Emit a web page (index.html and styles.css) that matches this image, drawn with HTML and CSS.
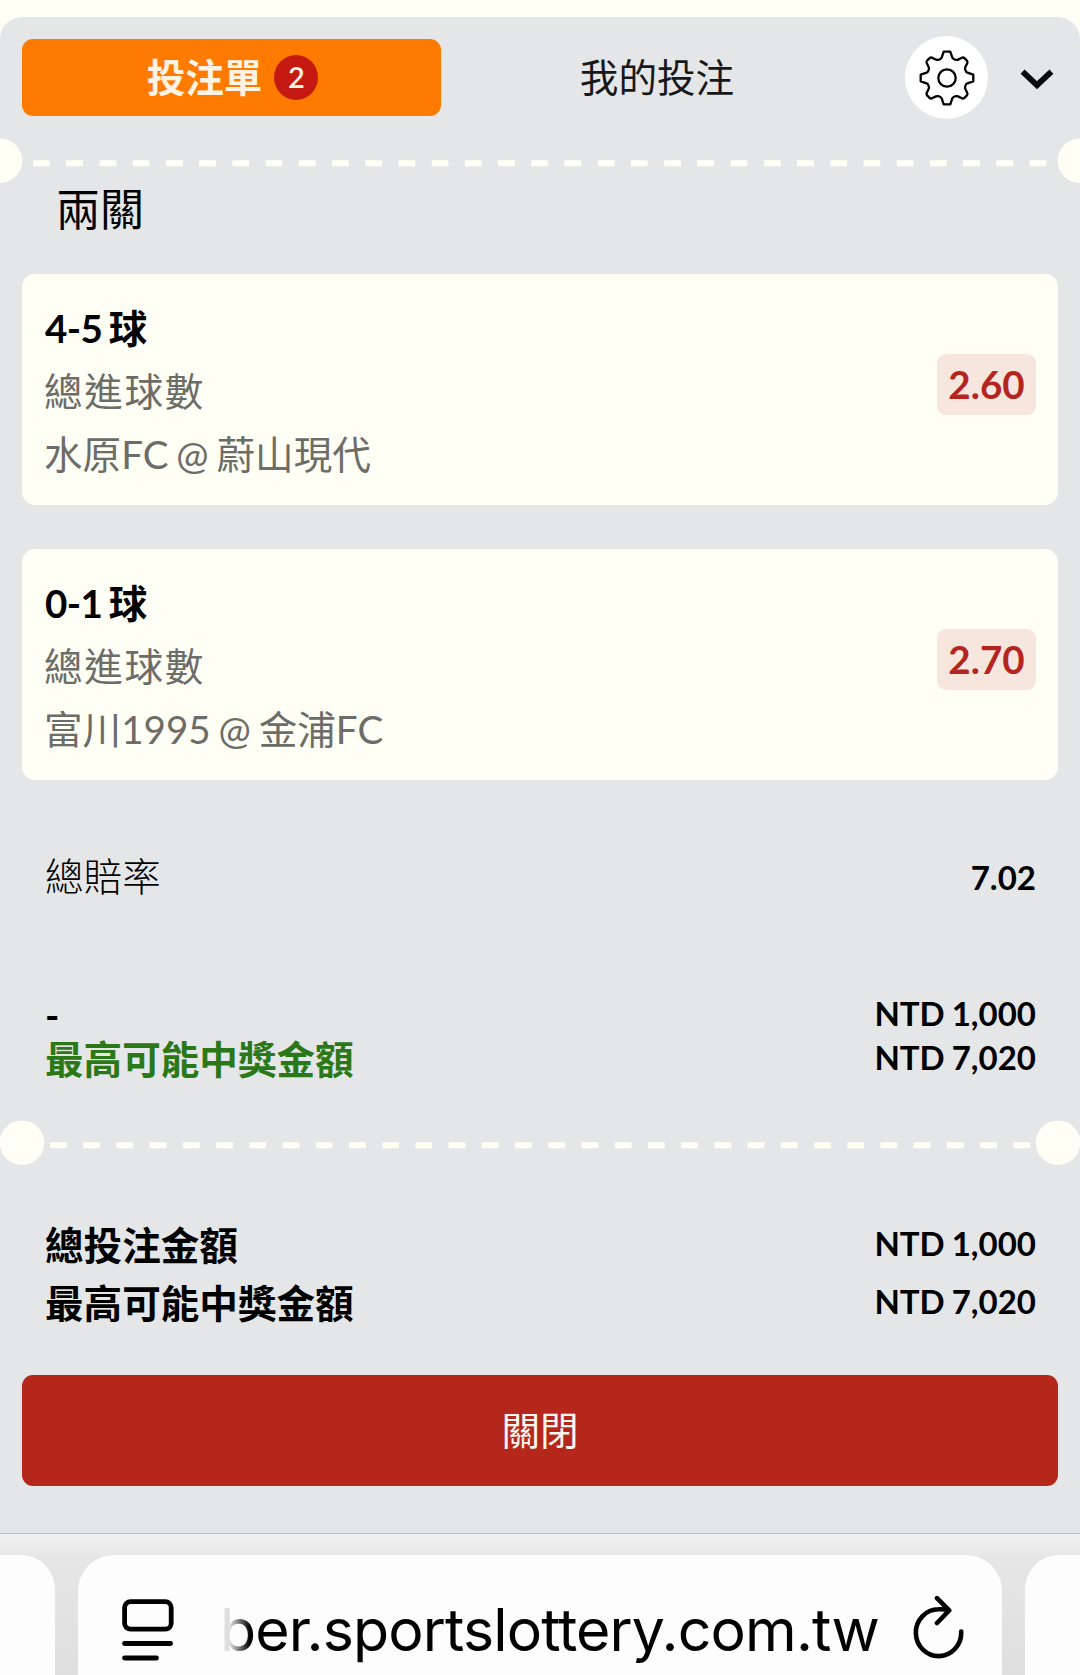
FILE: index.html
```html
<!DOCTYPE html>
<html lang="zh-Hant">
<head>
<meta charset="utf-8">
<title>投注單</title>
<link rel="stylesheet" href="styles.css">
</head>
<body>
<main class="slip">
  <header class="tabs">
    <div class="tab tab-active"><span>投注單</span><span class="count">2</span></div>
    <div class="tab tab-idle">我的投注</div>
    <button class="settings" aria-label="設定">
      <svg width="60" height="60" viewBox="-30 -30 60 60" fill="none" stroke="#000" stroke-width="2.3" stroke-linejoin="round">
        <path d="M-3.3-26.3H3.3L5.3-20.4Q6-18.9 7.5-18.5L9-18.1Q10-17.9 11-18.4L15-20.3Q16.4-20.8 17.4-19.9L19.9-17.4Q20.8-16.4 20.3-15L18.4-11Q17.9-10 18.1-9L18.5-7.5Q18.9-6 20.4-5.3L26.3-3.3V3.3L20.4 5.3Q18.9 6 18.5 7.5L18.1 9Q17.9 10 18.4 11L20.3 15Q20.8 16.4 19.9 17.4L17.4 19.9Q16.4 20.8 15 20.3L11 18.4Q10 17.9 9 18.1L7.5 18.5Q6 18.9 5.3 20.4L3.3 26.3H-3.3L-5.3 20.4Q-6 18.9-7.5 18.5L-9 18.1Q-10 17.9-11 18.4L-15 20.3Q-16.4 20.8-17.4 19.9L-19.9 17.4Q-20.8 16.4-20.3 15L-18.4 11Q-17.9 10-18.1 9L-18.5 7.5Q-18.9 6-20.4 5.3L-26.3 3.3V-3.3L-20.4-5.3Q-18.9-6-18.5-7.5L-18.1-9Q-17.9-10-18.4-11L-20.3-15Q-20.8-16.4-19.9-17.4L-17.4-19.9Q-16.4-20.8-15-20.3L-11-18.4Q-10-17.9-9-18.1L-7.5-18.5Q-6-18.9-5.3-20.4Z"/>
        <circle r="8.7"/>
      </svg>
    </button>
    <svg class="chevron" width="36" height="24" viewBox="0 0 36 24" fill="none" stroke="#0b0c0e" stroke-width="5.8"><path d="M3.6 4.6 18 18.2 32.4 4.6"/></svg>
  </header>

  <svg class="perforation" width="1080" height="46" viewBox="0 0 1080 46" fill="#fffff5">
    <circle cx="0" cy="22.7" r="22.3"/><circle cx="1080" cy="22.7" r="22.3"/>
    <path d="M33 25.2H1048" stroke="#fffff5" stroke-width="6" stroke-dasharray="16.8 16.42"/>
  </svg>

  <h1 class="combo">兩關</h1>

  <section class="card">
    <div class="pick">
      <div class="choice">4-5 球</div>
      <div class="market">總進球數</div>
      <div class="match">水原FC @ 蔚山現代</div>
    </div>
    <div class="odds">2.60</div>
  </section>
  <section class="card">
    <div class="pick">
      <div class="choice">0-1 球</div>
      <div class="market">總進球數</div>
      <div class="match">富川1995 @ 金浦FC</div>
    </div>
    <div class="odds">2.70</div>
  </section>

  <div class="row row-odds"><span class="light">總賠率</span><span class="amount">7.02</span></div>
  <div class="row row-stake"><span class="strong">-</span><span class="amount">NTD 1,000</span></div>
  <div class="row row-win"><span class="strong green">最高可能中獎金額</span><span class="amount">NTD 7,020</span></div>

  <svg class="perforation perforation-inner" width="1080" height="46" viewBox="0 0 1080 46" fill="#fffff5">
    <circle cx="22" cy="22.7" r="22.3"/><circle cx="1058" cy="22.7" r="22.3"/>
    <path d="M50 25.2H1031" stroke="#fffff5" stroke-width="6" stroke-dasharray="16.8 16.42"/>
  </svg>

  <div class="row row-total"><span class="strong">總投注金額</span><span class="amount">NTD 1,000</span></div>
  <div class="row row-total"><span class="strong">最高可能中獎金額</span><span class="amount">NTD 7,020</span></div>

  <button class="close">關閉</button>
</main>

<footer class="browser">
  <div class="side side-left"></div>
  <div class="address">
    <svg class="reader" width="52" height="64" viewBox="0 0 52 64" fill="none" stroke="#000" stroke-width="4.8" stroke-linecap="round">
      <rect x="2.6" y="2.6" width="46.6" height="27.6" rx="6"/>
      <path d="M2.5 44.5H48.6M2.5 59H34.5"/>
    </svg>
    <span class="url">ber.sportslottery.com.tw</span>
    <svg class="reload" width="52" height="64" viewBox="0 0 52 64" fill="none" stroke="#000" stroke-width="4.6" stroke-linecap="round" stroke-linejoin="round">
      <path d="M48.2 36.5A22.7 23.4 0 1 1 25.5 14.3Q31 14 35.8 15.4M24 3.2 36.2 15.4 24 28"/>
    </svg>
  </div>
  <div class="side side-right"></div>
</footer>
</body>
</html>
```

FILE: styles.css
```css
* { box-sizing: border-box; }

body {
  margin: 0;
  width: 1080px;
  height: 1675px;
  overflow: hidden;
  padding-top: 17px;
  display: flex;
  flex-direction: column;
  background: #fffff5;
  color: #000;
  font-family: Lato, "Noto Sans CJK TC", sans-serif;
  font-size: 38.6px;
}

button { border: 0; padding: 0; font: inherit; }
svg { display: block; flex: none; }

.slip {
  height: 1516px;
  flex: none;
  display: flex;
  flex-direction: column;
  background: #e5e6e8;
  border-radius: 22px 22px 0 0;
  overflow: hidden;
}

.tabs {
  height: 121px;
  flex: none;
  display: flex;
  align-items: center;
  padding: 0 25px 0 22px;
}
.tab {
  width: 419px;
  height: 77px;
  display: flex;
  align-items: center;
  justify-content: center;
  line-height: 75px;
}
.tab-active {
  gap: 12px;
  padding-left: 2px;
  border-radius: 11px;
  background: #ff7a00;
  color: #fff3e4;
  font-weight: 600;
}
.tab-idle { width: 432px; color: #17181a; }
.count {
  width: 44px;
  height: 45px;
  border-radius: 50%;
  background: #c41a12;
  font-size: 29px;
  line-height: 44px;
  text-align: center;
}
.settings {
  width: 83px;
  height: 83px;
  margin-left: 32px;
  border-radius: 50%;
  background: #fff;
  display: grid;
  place-items: center;
}
.chevron { margin: 2px 0 0 auto; }

.combo {
  margin: 1px 0 0;
  padding-left: 56px;
  height: 89px;
  font-size: 44px;
  line-height: 48px;
  font-weight: 400;
}

.card {
  height: 231px;
  flex: none;
  margin: 0 22px 44px;
  padding: 22px 22px 17px 22px;
  border-radius: 13px;
  background: #fffff5;
  display: flex;
  justify-content: space-between;
}
.pick > div { height: 63.5px; line-height: 63px; white-space: nowrap; }
.pick > .choice {
  padding-left: 1px;
  line-height: 65px;
  font-weight: 700;
  letter-spacing: -.6px;
  word-spacing: -2.4px;
}
.market, .match { color: #6c6c68; }
.market { letter-spacing: 1.7px; }
.match { word-spacing: -2px; }
.odds {
  width: 99px;
  height: 61px;
  margin-top: 58px;
  border-radius: 9px;
  background: #f6e6de;
  color: #b3251e;
  font-weight: 700;
  line-height: 61px;
  text-align: center;
}

.row {
  flex: none;
  display: flex;
  justify-content: space-between;
  padding: 0 44px 0 45px;
  height: 58px;
  line-height: 58px;
}
.row-odds { margin-top: 23px; }
.row-odds .amount { line-height: 60px; }
.row-stake { margin-top: 87px; height: 44px; line-height: 44px; }
.row-win { height: 44px; line-height: 44px; }
.row-stake .strong, .row-win .strong { padding-top: 1px; }
.row-stake .amount, .row-win .amount { line-height: 42px; }
.light { font-weight: 300; }
.strong { font-weight: 700; }
.green { color: #2b7819; }
.amount { font-size: 33px; font-weight: 700; word-spacing: -1px; }

.perforation-inner { margin: 40px 0 50px; }
.row-total .amount { line-height: 54px; }

.close {
  width: 1036px;
  height: 111px;
  flex: none;
  margin: 43px 22px 0;
  border-radius: 11px;
  background: #b5261b;
  color: #fff6ee;
  line-height: 108px;
  padding-bottom: 2px;
}

.browser {
  height: 142px;
  flex: none;
  display: flex;
  gap: 23px;
  padding-top: 21px;
  border-top: 1px solid #bcbdc1;
  background: linear-gradient(#f2f2f2, #e6e6e6 24px, #dfdfdf);
}
.side, .address { background: #fdfdfd; }
.side { width: 55px; flex: none; }
.side-left { border-radius: 0 34px 0 0; }
.side-right { border-radius: 34px 0 0 0; }
.address {
  width: 924px;
  flex: none;
  border-radius: 36px 36px 0 0;
  display: flex;
  padding: 40px 37px 0 44px;
}
.reader { margin-top: 4px; }
.url {
  width: 665px;
  margin-left: 46px;
  font: 400 59px/69px Inter, sans-serif;
  letter-spacing: -.85px;
  white-space: nowrap;
  mask-image: linear-gradient(90deg, rgba(0,0,0,.12) 10px, #000 30px);
}
.reload { margin-left: auto; }
```
